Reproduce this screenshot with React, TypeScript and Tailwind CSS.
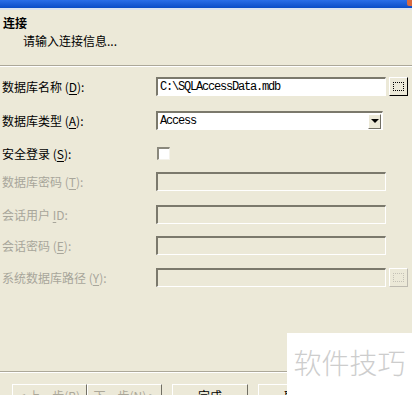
const cjk = "font-['Noto_Sans_CJK_SC',_'Noto_Sans',_sans-serif]";

function Key({ k }: { k: string }) {
  return (
    <>
      {" "}(<span className="underline underline-offset-2">{k}</span>):
    </>
  );
}

function Sunken({ disabled, children, className = "" }: { disabled?: boolean; children?: React.ReactNode; className?: string }) {
  return (
    <div
      className={`h-[19px] border-t-2 border-l-2 border-t-[#7b796c] border-l-[#7b796c] border-b border-r border-b-white border-r-white flex items-center ${
        disabled ? "bg-[#ECE9D8]" : "bg-white"
      } ${className}`}
    >
      {children}
    </div>
  );
}

function BrowseButton({ disabled }: { disabled?: boolean }) {
  return (
    <div
      className={`ml-[3px] w-[19px] h-[19px] border-t border-l border-t-white border-l-white border-b border-r flex items-center justify-center ${
        disabled ? "border-b-[#bdbab0] border-r-[#bdbab0] bg-[#ECE9D8]" : "border-b-black border-r-black bg-[#ECE9D8]"
      }`}
    >
      <div className={`w-[11px] h-[9px] border border-dotted ${disabled ? "border-[#c4c1b6]" : "border-black"}`} />
    </div>
  );
}

function Row({ label, disabled, className, children }: { label: React.ReactNode; disabled?: boolean; className: string; children: React.ReactNode }) {
  return (
    <div className={`flex items-center h-[19px] ${className}`}>
      <div className={`w-[156px] pl-[2px] text-[12px] leading-[14px] ${disabled ? "text-[#a8a69b]" : "text-black"}`}>{label}</div>
      {children}
    </div>
  );
}

export default function App() {
  return (
    <div className={`relative w-[412px] h-[395px] overflow-hidden bg-[#ECE9D8] ${cjk}`}>
      {/* title bar */}
      <div className="flex h-[8px] bg-gradient-to-b from-[#2a6ee8] to-[#0a4cc6]">
        <div className="flex-1" />
        <div className="w-[5px] h-[6px] bg-[#d9693f] rounded-bl-[2px]" />
      </div>
      <div className="h-[2px] bg-[#dbe3ef]" />

      {/* header */}
      <div className="h-[56px] pt-[6px] border-b border-b-[#aca899]">
        <div className="pl-[3px] text-[12px] leading-[14px] font-bold text-black">连接</div>
        <div className="pl-[23px] mt-[4px] text-[12px] leading-[14px] text-black">请输入连接信息...</div>
      </div>
      <div className="h-px bg-white" />

      {/* form */}
      <div className="flex flex-col">
        <Row className="mt-[10px]" label={<>数据库名称<Key k="D" /></>}>
          <Sunken className="w-[230px]">
            <span className="pl-[2px] font-['Liberation_Mono',_monospace] text-[12px] tracking-[-1.2px] text-black">C:\SQLAccessData.mdb</span>
          </Sunken>
          <BrowseButton />
        </Row>
        <Row className="mt-[15px]" label={<>数据库类型<Key k="A" /></>}>
          <Sunken className="w-[227px] justify-between">
            <span className="pl-[2px] font-['Liberation_Mono',_monospace] text-[12px] tracking-[-1.2px] text-black">Access</span>
            <div className="mr-[1px] w-[13px] h-[15px] bg-[#ECE9D8] border-t border-l border-t-white border-l-white border-b border-r border-b-[#716f64] border-r-[#716f64] flex items-center justify-center">
              <div className="w-0 h-0 border-l-[4px] border-r-[4px] border-t-[4px] border-l-transparent border-r-transparent border-t-black" />
            </div>
          </Sunken>
        </Row>
        <Row className="mt-[14px]" label={<>安全登录<Key k="S" /></>}>
          <div className="ml-[1px] w-[13px] h-[13px] bg-white border-t-2 border-l-2 border-t-[#8a887c] border-l-[#8a887c] border-b border-r border-b-[#f4f2ea] border-r-[#f4f2ea]" />
        </Row>
        <Row className="mt-[9px]" disabled label={<>数据库密码<Key k="T" /></>}>
          <Sunken disabled className="w-[230px]" />
        </Row>
        <Row className="mt-[14px]" disabled label={<>会话用户 <span className="underline underline-offset-2">I</span>D:</>}>
          <Sunken disabled className="w-[230px]" />
        </Row>
        <Row className="mt-[12px]" disabled label={<>会话密码<Key k="E" /></>}>
          <Sunken disabled className="w-[230px]" />
        </Row>
        <Row className="mt-[13px]" disabled label={<>系统数据库路径<Key k="Y" /></>}>
          <Sunken disabled className="w-[230px]" />
          <BrowseButton disabled />
        </Row>
      </div>

      {/* footer */}
      <div className="mt-[84px] h-px bg-[#aca899]" />
      <div className="h-px bg-white" />
      <div className="flex mt-[11px] pl-[12px] text-[12px] leading-[14px]">
        <div className="w-[75px] h-[23px] border-t border-l border-t-white border-l-white border-b border-r border-b-[#8f8d80] border-r-[#716f64] flex items-center justify-center text-[#aca899]">
          &lt; 上一步(<span className="underline">B</span>)
        </div>
        <div className="w-[75px] h-[23px] border-t border-l border-t-white border-l-white border-b border-r border-b-[#8f8d80] border-r-[#716f64] flex items-center justify-center text-[#aca899]">
          下一步(<span className="underline">N</span>) &gt;
        </div>
        <div className="ml-[10px] w-[76px] h-[23px] border-t border-l border-t-white border-l-white border-b border-r border-b-[#8f8d80] border-r-[#716f64] flex items-center justify-center text-black">
          完成
        </div>
        <div className="ml-[10px] w-[76px] h-[23px] border-t border-l border-t-white border-l-white border-b border-r border-b-[#8f8d80] border-r-[#716f64] flex items-center justify-center text-black">
          取消
        </div>
      </div>

      {/* watermark */}
      <div className="absolute left-[287px] top-[333px] right-0 bottom-0 bg-white flex items-start justify-center pt-[12px]">
        <span className="text-[28px] leading-[34px] text-[#cdcdcd] font-light">软件技巧</span>
      </div>
    </div>
  );
}
